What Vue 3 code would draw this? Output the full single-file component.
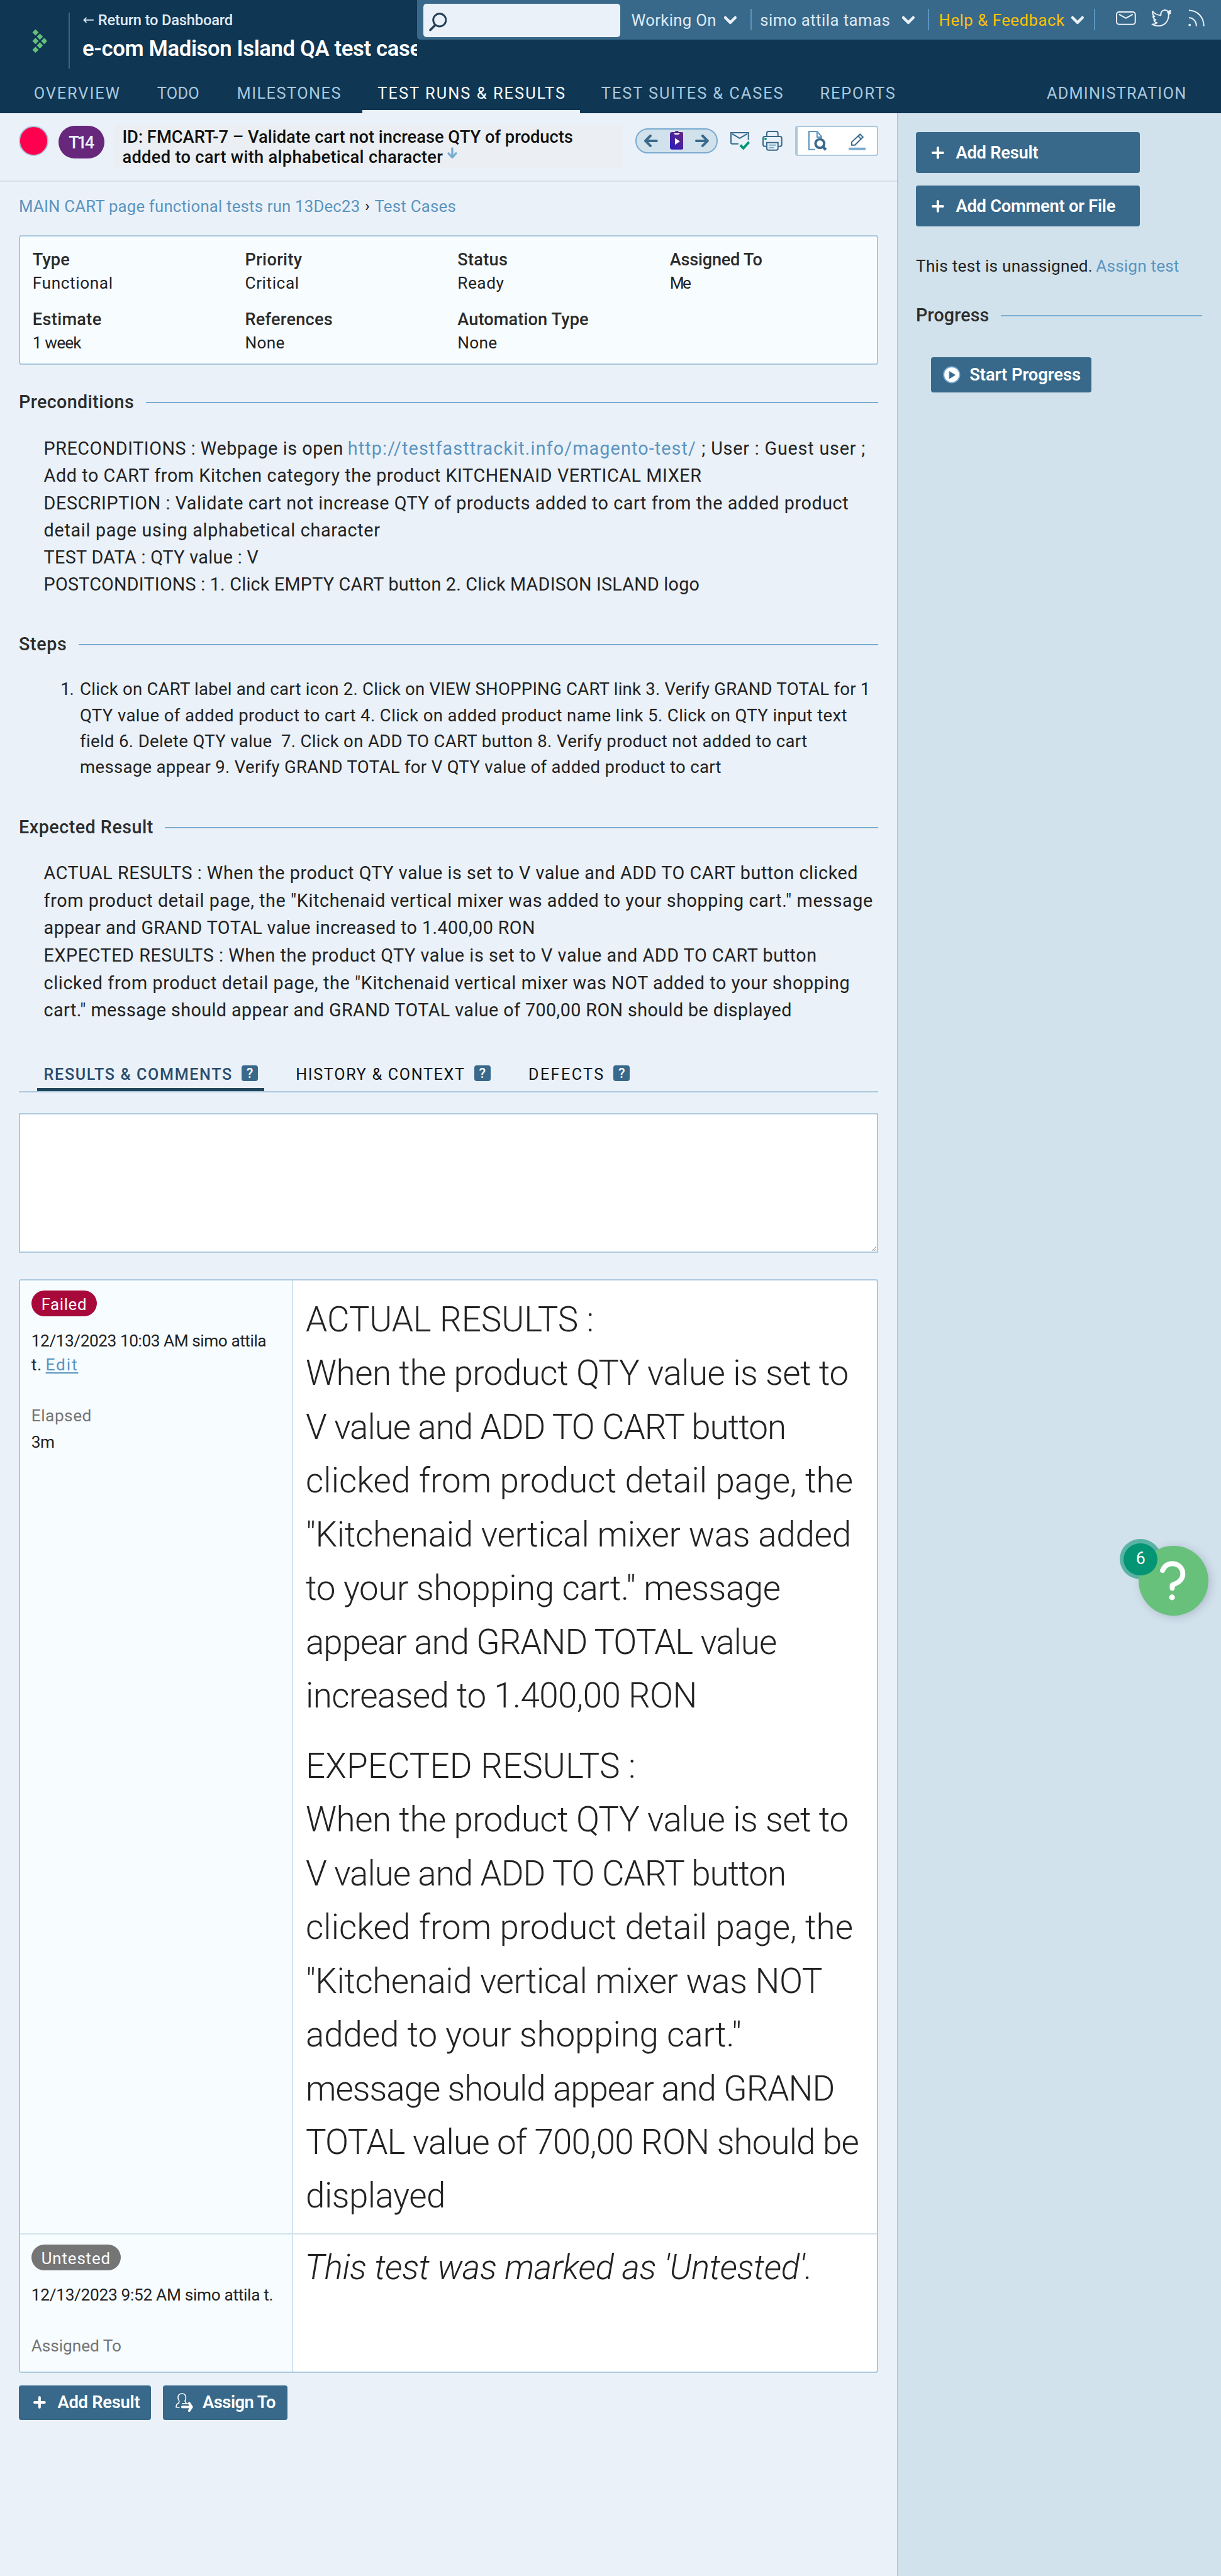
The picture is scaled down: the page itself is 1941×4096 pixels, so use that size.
<script setup>
// Sets the tracking of a text run so that it spans the given width.
const vFit = {
  mounted(el, { value }) {
    const scale = el.closest('.page').getBoundingClientRect().width / 1960
    const natural = el.getBoundingClientRect().width / scale
    const count = el.textContent.length
    el.style.letterSpacing = (value + 1.5 - natural) / Math.max(count - 1, 1) + 'px'
    el.style.width = value + 'px'
  },
}

const nav = [
  { label: 'OVERVIEW', w: 136, ml: 55 },
  { label: 'TODO', w: 66, ml: 62 },
  { label: 'MILESTONES', w: 165, ml: 62 },
  { label: 'TEST RUNS & RESULTS', w: 299, ml: 61, active: true },
  { label: 'TEST SUITES & CASES', w: 290, ml: 60 },
  { label: 'REPORTS', w: 119, ml: 61 },
  { label: 'ADMINISTRATION', w: 222, ml: 245 },
]

const info = [
  ['Type', 58, 'Functional', 127],
  ['Priority', 90, 'Critical', 85],
  ['Status', 79, 'Ready', 73],
  ['Assigned To', 147, 'Me', 33],
  ['Estimate', 109, '1 week', 77],
  ['References', 139, 'None', 62],
  ['Automation Type', 209, 'None', 62],
]

const preconditions = [
  ['Add to CART from Kitchen category the product KITCHENAID VERTICAL MIXER', 1054],
  ['DESCRIPTION : Validate cart not increase QTY of products added to cart from the added product', 1290],
  ['detail page using alphabetical character', 538],
  ['TEST DATA : QTY value : V', 343],
  ['POSTCONDITIONS : 1. Click EMPTY CART button 2. Click MADISON ISLAND logo', 1051],
]

const steps = [
  ['Click on CART label and cart icon 2. Click on VIEW SHOPPING CART link 3. Verify GRAND TOTAL for 1', 1267],
  ['QTY value of added product to cart 4. Click on added product name link 5. Click on QTY input text', 1230],
  ['field 6. Delete QTY value \u00a07. Click on ADD TO CART button 8. Verify product not added to cart', 1165],
  ['message appear 9. Verify GRAND TOTAL for V QTY value of added product to cart', 1028],
]

const expected = [
  ['ACTUAL RESULTS : When the product QTY value is set to V value and ADD TO CART button clicked', 1305],
  ['from product detail page, the "Kitchenaid vertical mixer was added to your shopping cart." message', 1329],
  ['appear and GRAND TOTAL value increased to 1.400,00 RON', 787],
  ['EXPECTED RESULTS : When the product QTY value is set to V value and ADD TO CART button', 1239],
  ['clicked from product detail page, the "Kitchenaid vertical mixer was NOT added to your shopping', 1292],
  ['cart." message should appear and GRAND TOTAL value of 700,00 RON should be displayed', 1199],
]

const tabs = [
  { label: 'RESULTS & COMMENTS', w: 300, active: true },
  { label: 'HISTORY & CONTEXT', w: 269 },
  { label: 'DEFECTS', w: 119 },
]

const comment = [
  [
    ['ACTUAL RESULTS :', 461],
    ['When the product QTY value is set to', 870],
    ['V value and ADD TO CART button', 770],
    ['clicked from product detail page, the', 877],
    ['"Kitchenaid vertical mixer was added', 874],
    ['to your shopping cart." message', 761],
    ['appear and GRAND TOTAL value', 755],
    ['increased to 1.400,00 RON', 627],
  ],
  [
    ['EXPECTED RESULTS :', 528],
    ['When the product QTY value is set to', 870],
    ['V value and ADD TO CART button', 770],
    ['clicked from product detail page, the', 877],
    ['"Kitchenaid vertical mixer was NOT', 828],
    ['added to your shopping cart."', 698],
    ['message should appear and GRAND', 848],
    ['TOTAL value of 700,00 RON should be', 887],
    ['displayed', 223],
  ],
]
</script>

<template>
  <div class="page">
    <header class="header">
      <div class="top">
        <svg class="logo" width="24" height="42" viewBox="0 0 24 42">
          <g fill="#65c179">
            <path d="M5.5 1.5l5 5-5 5-5-5z" /><path d="M12.5 8.5l5 5-5 5-5-5z" />
            <path d="M5.5 15.5l5 5-5 5-5-5z" /><path d="M19.5 15.5l5 5-5 5-5-5z" />
            <path d="M12.5 22.5l5 5-5 5-5-5z" /><path d="M5.5 29.5l5 5-5 5-5-5z" />
          </g>
        </svg>
        <div class="divider"></div>
        <div class="project">
          <div class="return">
            <svg width="18" height="14" viewBox="0 0 18 14"><path d="M5.500 3L1.500 7l4 4M1.500 7H17" fill="none" stroke="#dfe9f5" stroke-width="1.800" /></svg>
            <span v-fit="215" class="t">Return to Dashboard</span>
          </div>
          <div class="project-name"><span v-fit="543" class="t">e-com Madison Island QA test case</span></div>
        </div>
        <div class="toolbar">
          <div class="search">
            <svg width="28" height="36" viewBox="0 0 28 36"><circle cx="17" cy="15" r="10.200" fill="none" stroke="#223f58" stroke-width="3" /><path d="M10 23L2 31" stroke="#223f58" stroke-width="3.600" stroke-linecap="round" /></svg>
          </div>
          <span v-fit="135" class="t working">Working On</span>
          <svg class="chev c1" width="20" height="12" viewBox="0 0 20 12"><path d="M2 2l8 8 8-8" /></svg>
          <i class="sep s1"></i>
          <span v-fit="207" class="t user">simo attila tamas</span>
          <svg class="chev c2" width="20" height="12" viewBox="0 0 20 12"><path d="M2 2l8 8 8-8" /></svg>
          <i class="sep s2"></i>
          <span v-fit="200" class="t help">Help &amp; Feedback</span>
          <svg class="chev c3" width="20" height="12" viewBox="0 0 20 12"><path d="M2 2l8 8 8-8" /></svg>
          <i class="sep s3"></i>
          <svg class="social mail" width="32" height="22" viewBox="0 0 32 22"><rect x="1" y="1" width="30" height="20" rx="4" /><path d="M5 5l11 6 11-6" /></svg>
          <svg class="social bird" width="32" height="28" viewBox="0 0 32 28"><path d="M2.500 3c3 4 7 6 13 6.500C15 4 18 1 22 1c2.500 0 4 1 5 2.500L31 2l-1.500 3 1.500 1-3 2c.5 10-6 18.500-16.500 18.500-4 0-7-.8-10-2.500 4 0 6-1 8-2.500-3-.5-4.500-2-5-4.500h3c-3-1.500-4.500-3.500-4.500-6l2.500.5C2.500 9 1.500 6 2.500 3z" /><circle cx="28.500" cy="4.500" r="1.800" fill="#eaf1f8" /></svg>
          <svg class="social rss" width="26" height="28" viewBox="0 0 26 28"><path d="M1 1.500c14 0 24 11 24 25.500M1 13.500c7.500 0 12 6 12 13.500" /><circle cx="2.200" cy="25" r="1.500" fill="#eaf1f8" stroke-width="1" /></svg>
        </div>
      </div>
      <nav class="nav">
        <div v-for="n in nav" :key="n.label" class="nav-item" :class="{ active: n.active }" :style="{ marginLeft: n.ml + 'px' }">
          <span v-fit="n.w" class="t">{{ n.label }}</span>
        </div>
      </nav>
    </header>

    <div class="columns">
      <main class="main">
        <div class="head">
          <div class="status-dot"></div>
          <div class="test-id"><span v-fit="40" class="t">T14</span></div>
          <div class="title">
            <div><span v-fit="722" class="t">ID: FMCART-7 – Validate cart not increase QTY of products</span></div>
            <div class="title-row">
              <span v-fit="513" class="t">added to cart with alphabetical character</span>
              <svg width="16" height="19" viewBox="0 0 16 19"><path d="M8 2v14M2 10l6 6.500 6-6.500" fill="none" stroke="#79add2" stroke-width="3.400" stroke-linecap="round" stroke-linejoin="round" /></svg>
            </div>
          </div>
          <div class="pager">
            <svg width="22" height="20" viewBox="0 0 22 20"><path d="M10 2L2 10l8 8M3 10h17" /></svg>
            <svg class="clip" width="22" height="30" viewBox="0 0 22 30">
              <defs><linearGradient id="clipFill" x1="1" y1="0" x2="0" y2="1"><stop offset="0" stop-color="#67277b" /><stop offset="1" stop-color="#2a1cc0" /></linearGradient></defs>
              <rect x="8" y="0" width="6" height="6" rx="2.500" fill="#67277b" /><rect y="2" width="22" height="28" rx="3.500" fill="url(#clipFill)" />
              <path d="M6 4h10q-1 2-3 2H9q-2 0-3-2z" fill="#fff" /><path d="M8 11.500l8 5.500-8 5.500z" fill="#fff" />
            </svg>
            <svg width="22" height="20" viewBox="0 0 22 20"><path d="M12 2l8 8-8 8M19 10H2" /></svg>
          </div>
          <svg class="tool" width="32" height="32" viewBox="0 0 32 32" fill="none" stroke="#38698b" stroke-width="2"><path d="M13 21H3q-2 0-2-2V3h28v12M3 5l12 7 12-7" /><path d="M16 23l5 5 9-10" stroke="#039574" stroke-width="4" /></svg>
          <svg class="tool" width="32" height="32" viewBox="0 0 32 32" fill="none" stroke="#38698b" stroke-width="2"><path d="M7 9V4q0-3 3-3h12q3 0 3 3v5M7 25H4q-3 0-3-3V12q0-3 3-3h24q3 0 3 3v10q0 3-3 3h-3" /><path d="M7 19h18v9q0 3-3 3H10q-3 0-3-3z" /><path d="M10 23h12M10 27h9" stroke="#79abcf" /><circle cx="5" cy="13" r="2" fill="#039574" stroke="none" /></svg>
          <div class="modes">
            <svg width="30" height="33" viewBox="0 0 30 33" fill="none"><path d="M11 30H1V1h13l7 8v3M14 1v9h7" stroke="#5b94bf" stroke-width="2" /><circle cx="18.500" cy="20.500" r="7" stroke="#38698b" stroke-width="4" /><path d="M23 25l5 5.500" stroke="#38698b" stroke-width="4.500" /></svg>
            <svg class="pencil" width="28" height="27" viewBox="0 0 28 27" fill="none"><path d="M5 14L18.500 1.500l4.500 4.500L10 19H5zM15.500 4.500l4.500 4.500" stroke="#38698b" stroke-width="2" /><rect y="23" width="28" height="4" rx="1.500" fill="#79abcf" /></svg>
          </div>
        </div>

        <div class="crumbs">
          <a v-fit="546" class="t link">MAIN CART page functional tests run 13Dec23</a>
          <span class="caret">›</span>
          <a v-fit="129" class="t link">Test Cases</a>
        </div>

        <div class="info">
          <div v-for="i in info" :key="i[0]">
            <div class="label"><span v-fit="i[1]" class="t">{{ i[0] }}</span></div>
            <div class="value"><span v-fit="i[3]" class="t">{{ i[2] }}</span></div>
          </div>
        </div>

        <h3 class="section h1"><span v-fit="183" class="t">Preconditions</span><i></i></h3>
        <div class="body pre">
          <div class="line">
            <span v-fit="479" class="t">PRECONDITIONS : Webpage is open</span>
            <a v-fit="557" class="t link url">http://testfasttrackit.info/magento-test/</a>
            <span v-fit="261" class="t tail">; User : Guest user ;</span>
          </div>
          <div v-for="l in preconditions" :key="l[0]" class="line"><span v-fit="l[1]" class="t">{{ l[0] }}</span></div>
        </div>

        <h3 class="section h2"><span v-fit="75" class="t">Steps</span><i></i></h3>
        <div class="steps">
          <span v-fit="20" class="t num">1.</span>
          <div>
            <div v-for="l in steps" :key="l[0]" class="line"><span v-fit="l[1]" class="t">{{ l[0] }}</span></div>
          </div>
        </div>

        <h3 class="section h3"><span v-fit="214" class="t">Expected Result</span><i></i></h3>
        <div class="body exp">
          <div v-for="l in expected" :key="l[0]" class="line"><span v-fit="l[1]" class="t">{{ l[0] }}</span></div>
        </div>

        <div class="tabs">
          <div v-for="t in tabs" :key="t.label" class="tab" :class="{ active: t.active }">
            <span v-fit="t.w" class="t">{{ t.label }}</span><b>?</b>
          </div>
        </div>

        <div class="editor">
          <svg width="8" height="8" viewBox="0 0 8 8"><path d="M7 0L0 7M7 4L4 7" stroke="#777" /></svg>
        </div>

        <div class="results">
          <div class="result first">
            <div class="meta">
              <div class="badge failed"><span v-fit="71" class="t">Failed</span></div>
              <div class="date">
                <div><span v-fit="376" class="t">12/13/2023 10:03 AM simo attila</span></div>
                <div><span v-fit="15" class="t">t.</span><a v-fit="49" class="t link edit">Edit</a></div>
              </div>
              <div class="muted"><span v-fit="95" class="t">Elapsed</span></div>
              <div class="elapsed"><span v-fit="36" class="t">3m</span></div>
            </div>
            <div class="content">
              <div v-for="(p, k) in comment" :key="k" class="para">
                <div v-for="l in p" :key="l[0]"><span v-fit="l[1]" class="t">{{ l[0] }}</span></div>
              </div>
            </div>
          </div>
          <div class="result second">
            <div class="meta">
              <div class="badge untested"><span v-fit="109" class="t">Untested</span></div>
              <div class="date"><span v-fit="387" class="t">12/13/2023 9:52 AM simo attila t.</span></div>
              <div class="muted"><span v-fit="143" class="t">Assigned To</span></div>
            </div>
            <div class="content note"><span v-fit="814" class="t">This test was marked as 'Untested'.</span></div>
          </div>
        </div>

        <div class="actions">
          <div class="btn add">
            <svg width="20" height="20" viewBox="0 0 20 20"><path d="M10 2v16M2 10h16" /></svg>
            <span v-fit="131" class="t">Add Result</span>
          </div>
          <div class="btn assign">
            <svg class="person" width="28" height="30" viewBox="0 0 28 30"><path d="M11 17H19q-3-1-4-4 2-3 1.500-6.500C16 2.500 13.500 1 10.500 1S4.500 2.500 4 6.500Q4 10.500 6 13q0 3-2 4-3 1-3 6h5" stroke-width="1.600" /><path d="M11 22.500h14M22 16.500l4 6-4 6" stroke-width="4" /></svg>
            <span v-fit="116" class="t">Assign To</span>
          </div>
        </div>
      </main>

      <aside class="side">
        <div class="btn big"><svg width="20" height="20" viewBox="0 0 20 20"><path d="M10 2v16M2 10h16" /></svg><span v-fit="131" class="t">Add Result</span></div>
        <div class="btn big"><svg width="20" height="20" viewBox="0 0 20 20"><path d="M10 2v16M2 10h16" /></svg><span v-fit="255" class="t">Add Comment or File</span></div>
        <div class="unassigned"><span v-fit="282" class="t">This test is unassigned.</span><a v-fit="132" class="t link">Assign test</a></div>
        <h3 class="section hp"><span v-fit="116" class="t">Progress</span><i></i></h3>
        <div class="btn start">
          <svg width="28" height="28" viewBox="0 0 28 28"><circle cx="14" cy="14" r="12.800" fill="#fff" stroke="#7bacd0" stroke-width="2" /><path d="M10.500 9l9 5.500-9 5.500z" fill="#38698a" stroke="#38698a" stroke-width="1" /></svg>
          <span v-fit="177" class="t">Start Progress</span>
        </div>
      </aside>
    </div>

    <div class="help-widget">
      <div class="help-count-ring"></div>
      <div class="help-circle">
        <svg width="112" height="112" viewBox="0 0 112 112"><path d="M38.500 39.500C42 31 48 28.500 54.500 28.500 64 28.500 71 36 71 45c0 10-8 14.500-17 18v5" fill="none" stroke="#fff" stroke-width="8" stroke-linecap="round" stroke-linejoin="round" /><circle cx="53.700" cy="82.700" r="4.600" fill="#fff" /></svg>
      </div>
      <div class="help-count">6</div>
    </div>
  </div>
</template>

<style>
html, body { background: #eaf1f8; overflow: hidden; }
</style>

<style scoped>
.page { position: relative; box-sizing: border-box; width: 1960px; height: 4136px; zoom: 0.9903; background: #eaf1f8; color: #222; font: 400 26.500px Roboto, "Liberation Sans", sans-serif; overflow: hidden; }
.page * { box-sizing: border-box; }
.t { display: inline-block; flex: none; white-space: pre; position: relative; left: -0.700px; top: 0.700px; vertical-align: top; }
.link { color: #5b94bf; }
svg { display: block; flex: none; }

.header { height: 182px; background: #0f3653; }
.top { display: flex; height: 116px; }
.logo { margin: 45px 0 0 51px; }
.divider { width: 2px; height: 90px; margin: 20px 0 0 35px; background: #38698b; }
.project { width: 558px; padding: 17px 0 0 21px; overflow: hidden; }
.return { display: flex; align-items: center; gap: 7px; height: 30px; line-height: 30px; font-size: 24px; font-weight: 500; color: #dfe9f5; }
.project-name { margin-top: 8.500px; height: 44px; line-height: 44px; font-size: 35px; font-weight: 600; color: #fff; white-space: nowrap; }
.toolbar { display: flex; align-items: center; width: 1290px; height: 64px; line-height: 64px; padding-left: 10px; background: #38698a; border-bottom-left-radius: 5px; color: #dfe9f7; font-size: 26px; }
.search { width: 316px; height: 54px; margin-top: 2px; padding: 11px 0 0 9px; border-radius: 5px; background: #eaf1f8; }
.working { margin-left: 18px; }
.user { margin-left: 14px; }
.help { margin-left: 16px; color: #ffc107; }
.chev { fill: none; stroke: #eaf1f8; stroke-width: 4.500; stroke-linejoin: round; stroke-linecap: round; overflow: visible; }
.c1 { margin-left: 13px; }
.c2 { margin-left: 20px; }
.c3 { margin-left: 12px; }
.sep { width: 2px; height: 34px; margin-bottom: 2px; background: #5b94bf; }
.s1 { margin-left: 23px; }
.s2 { margin-left: 22px; }
.s3 { margin-left: 16px; }
.social { fill: none; stroke: #eaf1f8; stroke-width: 2; stroke-linejoin: round; overflow: visible; margin-bottom: 6px; }
.mail { margin-left: 34px; }
.bird { margin-left: 24px; }
.rss { margin-left: 28px; }
.nav { display: flex; height: 66px; line-height: 66px; font-size: 25.600px; color: #aac9df; }
.nav-item.active { color: #fff; padding: 0 25px; margin-left: 36px !important; margin-right: -25px; border-bottom: 6px solid #eaf1f8; }

.columns { display: flex; height: 3954px; }
.main { width: 1440px; }
.head { display: flex; align-items: flex-start; height: 110px; padding: 20px 0 0 30px; border-bottom: 2.100px solid #d3e2ee; }
.status-dot { width: 48px; height: 48px; border-radius: 50%; border: 2.100px solid #a6c6dc; background: #ff004f; }
.test-id { width: 74px; height: 52px; margin-left: 16px; padding-left: 17px; border-radius: 26px; background: #67277b; color: #eaf1f8; font-size: 27.600px; font-weight: 500; line-height: 53px; }
.title { width: 816px; height: 70px; margin: -2px 0 0 16px; padding: 4.600px 0 0 13px; background: #ebeff3; color: #111; font-size: 27.600px; font-weight: 500; line-height: 32px; white-space: nowrap; }
.title-row { display: flex; gap: 8px; }
.pager { display: flex; align-items: center; justify-content: space-between; width: 132px; height: 40px; margin: 4px 0 0 20px; padding: 0 12px; border: 2.100px solid #7bacd0; border-radius: 20px; background: #d1e2ec; }
.pager svg { fill: none; stroke: #38698b; stroke-width: 4; stroke-linecap: round; stroke-linejoin: round; }
.pager .clip { stroke: none; margin-top: -2px; }
.tool { margin: 8px 0 0 20px; }
.modes { display: flex; width: 134px; height: 48px; margin-left: 20px; padding: 6px 0 0 18px; gap: 34px; border: 2.100px solid #aac9df; border-left-width: 4.100px; border-radius: 4px; background: #fff; }
.pencil { margin-top: 4px; }

.crumbs { display: flex; height: 40px; margin: 19px 0 0 31px; line-height: 40px; font-size: 26px; }
.caret { width: 25px; text-align: center; }
.info { display: grid; grid-template-columns: repeat(4, 341px); grid-auto-rows: 76px; row-gap: 19.700px; width: 1380px; height: 208px; margin: 27px 0 0 30px; padding: 18px 0 0 21px; border: 2.100px solid #a9c7dd; border-radius: 4px; background: #f7fcff; line-height: 38px; }
.label { height: 38px; font-size: 27.400px; font-weight: 500; color: #2b2b2b; }
.value { height: 38px; font-size: 26.500px; }

.section { display: flex; align-items: center; gap: 20px; width: 1379px; height: 40px; margin: 0 0 0 31px; line-height: 40px; font-size: 29px; font-weight: 500; color: #2d2d2d; }
.section i { flex: 1; height: 2px; margin-top: 2px; background: #7bacd0; }
.h1 { margin-top: 39.800px; }
.h2 { margin-top: 54.200px; }
.h3 { margin-top: 56.400px; }
.body { margin-left: 71px; font-size: 29px; white-space: nowrap; }
.pre { margin-top: 32.500px; }
.pre .line { display: flex; height: 43.600px; line-height: 43.600px; }
.url { margin-left: 9px; }
.tail { margin-left: 11px; }
.exp { margin-top: 32px; }
.exp .line { height: 44px; line-height: 44px; }
.steps { display: flex; margin: 31.200px 0 0 98px; font-size: 27.800px; line-height: 41.600px; }
.steps .line { height: 41.600px; }
.num { margin-right: 11px; }

.tabs { display: flex; width: 1380px; height: 54px; margin: 55.900px 0 0 30px; padding-left: 30px; border-bottom: 2.100px solid #abc9df; color: #111; font-size: 25.400px; line-height: 50px; }
.tab { display: flex; height: 52px; padding: 0 10px 0 11px; margin-right: 40.500px; }
.tab.active { color: #2b4d6d; font-weight: 500; border-bottom: 6px solid #22465c; }
.tab b { width: 26px; height: 26px; margin: 10.500px 0 0 17px; border-radius: 4px; background: #38698b; color: #fff; font-size: 22px; font-weight: 500; line-height: 27px; text-align: center; }
.editor { display: flex; align-items: flex-end; justify-content: flex-end; width: 1380px; height: 224px; margin: 34px 0 0 30px; border: 2.100px solid #abc9df; background: #fff; }

.results { width: 1380px; height: 1756px; margin: 42px 0 0 30px; border: 2.100px solid #abc9df; border-radius: 4px; background: #fff; overflow: hidden; }
.result { display: flex; white-space: nowrap; }
.first { height: 1532px; border-bottom: 2.100px solid #d1e2ec; }
.second { height: 220px; }
.meta { width: 439px; padding: 16px 0 0 18px; border-right: 2.100px solid #d1e2ec; background: #f7fcff; line-height: 38.500px; }
.badge { width: 106px; height: 42px; padding-left: 17px; border-radius: 21px; color: #fff; font-size: 26px; line-height: 45px; }
.failed { background: #a9093a; }
.untested { width: 144px; background: #757575; }
.date { margin: 19.400px 0 0 1px; }
.date > div { height: 38.500px; }
.edit { margin-left: 8px; text-decoration: underline; text-decoration-thickness: 2px; text-underline-offset: 3px; }
.muted { height: 38.500px; margin: 43.500px 0 0 1px; color: #757575; }
.elapsed { margin: 3px 0 0 1px; }
.content { padding: 19.500px 0 0 20.500px; font-size: 55.300px; line-height: 86.300px; font-weight: 350; }
.para > div { height: 86.300px; }
.para + .para { margin-top: 26.700px; }
.note { padding: 9.500px 0 0 19px; font-style: italic; }

.btn { display: flex; align-items: center; border-radius: 4px; background: #38698a; color: #fff; font-size: 27.600px; font-weight: 600; height: 56px; line-height: 58px; }
.btn svg { fill: none; stroke: #fff; stroke-width: 4; stroke-linecap: round; stroke-linejoin: round; }
.actions { display: flex; gap: 20px; margin: 20px 0 0 30px; }
.add { width: 212px; padding-left: 24px; gap: 19px; }
.assign { width: 200px; padding-left: 20px; gap: 16px; }

.side { width: 520px; padding: 30px 0 0 28px; border-left: 2.100px solid #aac9df; background: #d1e2ec; }
.big { width: 360px; height: 66px; margin-bottom: 20px; padding-left: 26px; gap: 19px; line-height: 68px; }
.unassigned { display: flex; gap: 7px; height: 40px; margin: 43px 0 0 1px; line-height: 40px; }
.hp { width: 459px; margin: 39px 0 0 1px; }
.start { width: 258px; margin: 48px 0 0 24px; padding-left: 20px; gap: 15px; }

.help-widget { position: absolute; left: 1797px; top: 2471px; width: 143px; height: 123px; }
.help-count-ring { position: absolute; left: 0; top: 0; width: 67px; height: 65px; border-radius: 50%; background: #5ab3a5; }
.help-circle { position: absolute; left: 31px; top: 11px; width: 112px; height: 112px; border-radius: 50%; background: #67c17b; box-shadow: 3px 2px 14px rgba(90, 80, 120, 0.28); }
.help-count { position: absolute; left: 7px; top: 7px; width: 54px; height: 52px; border-radius: 50%; background: #039574; color: #fff; font-size: 27px; line-height: 50px; text-align: center; }
</style>
